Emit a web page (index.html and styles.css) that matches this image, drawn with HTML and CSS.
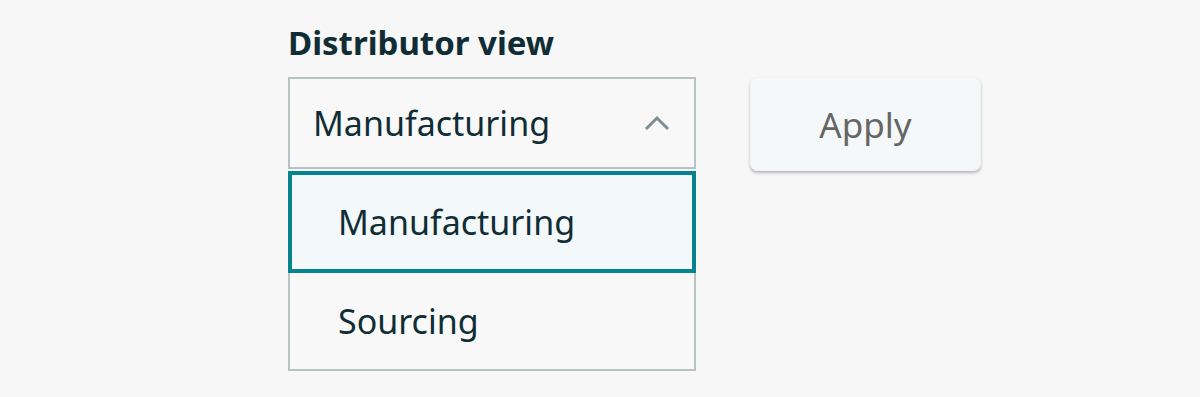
FILE: index.html
```html
<!DOCTYPE html>
<html lang="en">
<head>
  <meta charset="UTF-8">
  <meta name="viewport" content="width=device-width, initial-scale=1.0">
  <title>Distributor view</title>
  <link rel="stylesheet" href="styles.css">
</head>
<body>
  <div class="form-row">
    <div class="field">
      <label class="field-label" for="viewSelect">Distributor view</label>
      <div class="select" id="viewSelect">
        <span class="select-value">Manufacturing</span>
        <svg class="caret" width="26" height="16" viewBox="0 0 26 16">
          <path d="M2 14 L13 3 L24 14" fill="none" stroke="#7d8f93" stroke-width="3"/>
        </svg>
      </div>
      <ul class="options">
        <li class="option selected">Manufacturing</li>
        <li class="option">Sourcing</li>
      </ul>
    </div>
    <button class="apply-btn">Apply</button>
  </div>
</body>
</html>
```

FILE: styles.css
```css
body {
  margin: 0;
  background: #f7f7f7;
  font-family: 'Noto Sans', 'Open Sans', sans-serif;
  color: #102d35;
}

.form-row {
  display: flex;
  align-items: flex-start;
  padding: 22px 0 0 288px;
}

.field {
  width: 408px;
}

.field-label {
  display: block;
  font-size: 33px;
  font-weight: 700;
  line-height: 42px;
  margin-bottom: 13px;
}

.select {
  display: flex;
  align-items: center;
  justify-content: space-between;
  height: 88px;
  padding: 0 24px 0 23px;
  border: 2px solid #b6c2c3;
  background: #f8f8f8;
}

.select-value {
  font-size: 34px;
}

.options {
  list-style: none;
  margin: 2px 0 0;
  padding: 0;
  border: 2px solid #b6c2c3;
  border-top: none;
  background: #f8f8f8;
}

.option {
  height: 96px;
  display: flex;
  align-items: center;
  padding-left: 48px;
  font-size: 34px;
}

.option.selected {
  height: 94px;
  margin: 0 -2px;
  padding-left: 46px;
  border: 4px solid #06838f;
  background: #f3f8fa;
}

.apply-btn {
  margin: 55px 0 0 54px;
  width: 231px;
  height: 94px;
  font-family: inherit;
  font-size: 35px;
  color: #666;
  background: #f5f8f9;
  border: 1px solid #f0f2f3;
  border-radius: 7px;
  box-shadow: 0 2px 3px rgba(0, 0, 0, 0.25);
  cursor: pointer;
}
```
